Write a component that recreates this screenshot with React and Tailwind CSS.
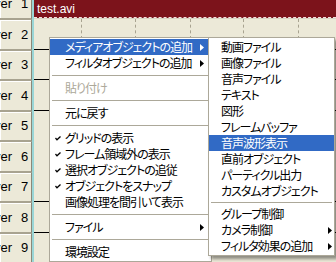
import React from "react";

const JP = "font-['MS_UI_Gothic','Noto_Sans_CJK_JP',sans-serif] text-[12px] leading-[16px] tracking-[-1px] [font-feature-settings:'palt']";

const MAIN_ITEMS = [
  { label: "メディアオブジェクトの追加", arrow: true, active: true },
  { label: "フィルタオブジェクトの追加", arrow: true },
  "sep",
  { label: "貼り付け", disabled: true },
  "sep",
  { label: "元に戻す" },
  "sep",
  { label: "グリッドの表示", checked: true },
  { label: "フレーム領域外の表示", checked: true },
  { label: "選択オブジェクトの追従", checked: true },
  { label: "オブジェクトをスナップ", checked: true },
  { label: "画像処理を間引いて表示" },
  "sep",
  { label: "ファイル", arrow: true },
  "sep",
  { label: "環境設定" },
];

const SUB_ITEMS = [
  { label: "動画ファイル" },
  { label: "画像ファイル" },
  { label: "音声ファイル" },
  { label: "テキスト" },
  { label: "図形" },
  { label: "フレームバッファ" },
  { label: "音声波形表示", active: true },
  { label: "直前オブジェクト" },
  { label: "パーティクル出力" },
  { label: "カスタムオブジェクト" },
  "sep",
  { label: "グループ制御" },
  { label: "カメラ制御", arrow: true },
  { label: "フィルタ効果の追加", arrow: true },
];

const LAYERS = [1, 2, 3, 4, 5, 6, 7, 8, 9];
// rows whose bottom edge shows a black line left of the menu
const LINED = [2, 3, 4, 7, 8, 9];
const GRID_X = [81, 135, 190, 243, 298];

function Arrow({ white }) {
  return (
    <svg width="4" height="7" viewBox="0 0 4 7" className="shrink-0">
      <polygon points="0,0 4,3.5 0,7" fill={white ? "#fff" : "#000"} />
    </svg>
  );
}

function Check() {
  return (
    <svg width="6" height="5" viewBox="0 0 6 5" className="absolute left-[5px] top-[6px]">
      <polyline points="0.5,2 2,3.8 5.5,0.5" fill="none" stroke="#000" strokeWidth="1.3" />
    </svg>
  );
}

function MenuItem({ item, textPad, arrowPad }) {
  const { label, arrow, active, disabled, checked } = item;
  return (
    <div
      className={`relative flex h-[16px] items-center justify-between ${textPad} ${arrowPad} ${
        active ? "bg-[#316ac5] text-white" : disabled ? "text-[#aca899]" : "text-black"
      }`}
    >
      {checked && <Check />}
      <span className="whitespace-nowrap">{label}</span>
      {arrow && <Arrow white={active} />}
    </div>
  );
}

function Menu({ items, className, textPad, arrowPad, sepH }) {
  return (
    <div className={`absolute border border-[#aca899] bg-white py-px ${JP} ${className}`}>
      {items.map((item, i) =>
        item === "sep" ? (
          <div key={i} className={`flex items-center px-[2px] ${sepH}`}>
            <div className="h-px w-full bg-[#aca899]" />
          </div>
        ) : (
          <MenuItem key={i} item={item} textPad={textPad} arrowPad={arrowPad} />
        )
      )}
    </div>
  );
}

export default function App() {
  return (
    <div className="relative h-[262px] w-[336px] overflow-hidden bg-[#ece9d8]">
      <div className="flex h-full">
        {/* layer headers */}
        <div className="-mt-[10.5px] flex w-[32px] shrink-0 flex-col bg-[#a8a390]">
          {LAYERS.map((n) => (
            <div
              key={n}
              className="flex h-[30.5px] shrink-0 items-center overflow-hidden border-b-2 border-r border-b-[#a8a390] border-r-[#8c8878] bg-[#ece9d8] shadow-[inset_1px_1px_0_#fff] font-['Liberation_Sans',sans-serif] text-[13px] text-black"
            >
              <div className="flex w-[12px] shrink-0 justify-end">
                <span className="whitespace-nowrap">Layer</span>
              </div>
              <span className="ml-[9px]">{n}</span>
            </div>
          ))}
        </div>
        <div className="w-[2px] shrink-0 bg-[#9ad6d6]" />

        {/* timeline */}
        <div className="relative flex min-w-0 flex-1 flex-col">
          <div className="flex h-[18px] shrink-0 items-center border-b border-dashed border-b-[#f3e0e0] bg-[#7c131b] pl-[3px] font-['Liberation_Sans',sans-serif] text-[12px] text-white">
            test.avi
          </div>
          <div className="h-px shrink-0 bg-[#d8d4c4]" />
          {LAYERS.slice(1).map((n) => (
            <div
              key={n}
              className={`h-[30.5px] shrink-0 border-b bg-[#ece9d8] ${
                LINED.includes(n) ? "border-b-black" : "border-b-transparent"
              }`}
            />
          ))}
          {GRID_X.map((x) => (
            <div
              key={x}
              className="absolute top-[19px] h-[20px] border-l border-dashed border-l-[#a8a390]"
              style={{ left: x - 34 }}
            />
          ))}
        </div>
      </div>

      <Menu
        items={MAIN_ITEMS}
        className="left-[49px] top-[37px] w-[163px]"
        textPad="pl-[15px]"
        arrowPad="pr-[7px]"
        sepH="h-[9px]"
      />
      <Menu
        items={SUB_ITEMS}
        className="left-[208px] top-[37px] w-[127px] shadow-[3px_3px_3px_rgba(0,0,0,0.4)]"
        textPad="pl-[12px]"
        arrowPad="pr-[2px]"
        sepH="h-[7px]"
      />
    </div>
  );
}
